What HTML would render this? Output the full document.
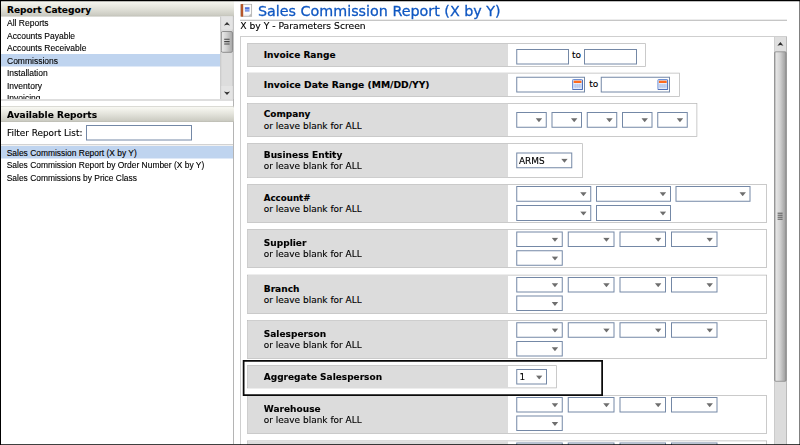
<!DOCTYPE html>
<html><head><meta charset="utf-8"><title>Sales Commission Report (X by Y)</title>
<style>
html,body{margin:0;padding:0;}
body{width:800px;height:445px;overflow:hidden;background:#fff;position:relative;}
#stage{position:absolute;left:0;top:0;width:3200px;height:1780px;transform:scale(0.25);transform-origin:0 0;font-family:"DejaVu Sans", "Liberation Sans", sans-serif;color:#000;}
#stage div,#stage span{box-sizing:border-box;}

.abs{position:absolute;}
.hdr{position:absolute;left:4px;width:932px;background:linear-gradient(#f8f8f2 0%,#e4e4dc 45%,#cbcbc2 92%,#b9b9b0 100%);}
.tx{position:absolute;white-space:nowrap;transform-origin:0 0;color:#000;-webkit-text-stroke:0.48px #000;}
.b{font-weight:bold;}
.ar{font-family:"Liberation Sans", sans-serif;}
.selbg{position:absolute;background:#bfd4ef;}
.row{position:absolute;left:988px;border:3.2px solid #b9b9b9;background:#fff;}
.lab{position:absolute;left:0;top:0;bottom:0;width:1041.2px;background:#dcdcdc;}
.inp{position:absolute;border:4px solid #7488a6;background:#fff;}
.cb{position:absolute;border:4px solid #7488a6;background:#fff;}
.cb svg{position:absolute;right:13.6px;top:20.4px;width:27.6px;height:18px;}
</style></head>
<body>
<div id="stage">
<div class="abs" style="left:932px;top:4px;width:4px;height:1772px;background:#b4b4b4"></div>
<div class="hdr" style="top:4px;height:62px"></div>
<div class="tx b" style="left:28px;top:15.72px;font-size:34.4px;line-height:44.72px;transform:scaleX(1.053);">Report Category</div>
<div class="abs" style="left:4px;top:66px;width:928px;height:330px;overflow:hidden">
<div class="selbg" style="left:0px;top:150px;width:878px;height:50px"></div>
<div class="tx ar" style="left:24px;top:4.12px;font-size:34px;line-height:44.2px;">All Reports</div>
<div class="tx ar" style="left:24px;top:54.12px;font-size:34px;line-height:44.2px;">Accounts Payable</div>
<div class="tx ar" style="left:24px;top:104.12px;font-size:34px;line-height:44.2px;">Accounts Receivable</div>
<div class="tx ar" style="left:24px;top:154.12px;font-size:34px;line-height:44.2px;">Commissions</div>
<div class="tx ar" style="left:24px;top:204.12px;font-size:34px;line-height:44.2px;">Installation</div>
<div class="tx ar" style="left:24px;top:254.12px;font-size:34px;line-height:44.2px;">Inventory</div>
<div class="tx ar" style="left:24px;top:304.12px;font-size:34px;line-height:44.2px;">Invoicing</div>
</div>
<div class="abs" style="left:881.2px;top:66px;width:52.8px;height:330px;background:#dddddd;border-left:4px solid #c6c6c6;border-right:4px solid #bdbdbd"></div>
<div class="abs" style="left:885.2px;top:66px;width:45.6px;height:52px;background:#e4e4e4"></div>
<div class="abs" style="left:885.2px;top:344px;width:45.6px;height:52px;background:#e4e4e4"></div>
<svg class="abs" style="left:884px;top:64px;width:48px;height:336px" viewBox="0 0 12 84"><path d="M2.9 9.6 L6 6 L9.1 9.6 L6 8.8 Z" fill="#333"/><rect x="0.3" y="15.5" width="11.2" height="20.8" rx="1.5" fill="url(#tg)" stroke="#8e8e8e"/><path d="M3.2 23.2h5.4M3.2 25.6h5.4M3.2 28h5.4" stroke="#444" stroke-width="1.1"/><path d="M2.9 75.4 L6 79 L9.1 75.4 L6 76.2 Z" fill="#333"/><defs><linearGradient id="tg" x1="0" x2="1" y1="0" y2="0"><stop offset="0" stop-color="#ececec"/><stop offset="0.45" stop-color="#d2d2d2"/><stop offset="1" stop-color="#a6a6a6"/></linearGradient></defs></svg>
<div class="abs" style="left:4px;top:397.6px;width:928px;height:4px;background:#bdbdbd"></div>
<div class="abs" style="left:4px;top:425.2px;width:932px;height:4px;background:#cfcfc8"></div>
<div class="hdr" style="top:429.2px;height:58.4px"></div>
<div class="tx b" style="left:28px;top:438.12px;font-size:34.4px;line-height:44.72px;transform:scaleX(1.055);">Available Reports</div>
<div class="tx" style="left:28px;top:508.12px;font-size:34.4px;line-height:44.72px;transform:scaleX(1.03);">Filter Report List:</div>
<div class="inp" style="left:344px;top:500px;width:424px;height:62px"></div>
<div class="abs" style="left:4px;top:576.8px;width:928px;height:4px;background:#c4c4c4"></div>
<div class="selbg" style="left:4px;top:584px;width:928px;height:50px"></div>
<div class="tx ar" style="left:26.8px;top:588.8px;font-size:33.72px;line-height:43.84px;">Sales Commission Report (X by Y)</div>
<div class="tx ar" style="left:26.8px;top:639px;font-size:33.72px;line-height:43.84px;">Sales Commission Report by Order Number (X by Y)</div>
<div class="tx ar" style="left:26.8px;top:689.2px;font-size:33.72px;line-height:43.84px;">Sales Commissions by Price Class</div>
<svg class="abs" style="left:960px;top:14px;width:52px;height:56px" viewBox="0 0 13 14"><rect x="2.2" y="0.8" width="9.4" height="12" fill="#f3f3f3" stroke="#b2b2b2" stroke-width="0.9"/><rect x="3" y="1.4" width="7.8" height="9.4" fill="#fcfcfc"/><rect x="0.3" y="0.6" width="1.2" height="12.6" rx="0.5" fill="#b9ada4"/><rect x="0.9" y="0.5" width="2.3" height="12.8" rx="0.7" fill="#b5562a"/><rect x="4.9" y="3.7" width="4.6" height="2.2" fill="#4f72dc"/><rect x="4.9" y="5.9" width="4.6" height="2.3" fill="#7d99e6"/><path d="M8.4 12.8 L11.6 9.6 L11.6 12.8 Z" fill="#bdbdbd"/></svg>
<div class="tx" style="left:1032px;top:7.44px;font-size:57.2px;line-height:74.36px;color:#0f57c2;-webkit-text-stroke:1.12px #0f57c2;">Sales Commission Report (X by Y)</div>
<div class="abs" style="left:960px;top:79.2px;width:2188px;height:4px;background:#b4b4b4"></div>
<div class="tx" style="left:961.2px;top:82.92px;font-size:34.4px;line-height:44.72px;transform:scaleX(1.07);">X by Y - Parameters Screen</div>
<div class="abs" style="left:960px;top:144.8px;width:2188px;height:1680px;border:3.2px solid #c0c0c0"></div>
<div class="abs" style="left:3095.6px;top:148px;width:52px;height:1629.6px;background:#dcdcdc;border-left:3.2px solid #c6c6c6;border-right:3.2px solid #b0b0b0"></div>
<div class="abs" style="left:3098.8px;top:148px;width:45.6px;height:56px;background:#dfdfdf"></div>
<svg class="abs" style="left:3096px;top:148px;width:52px;height:1380px" viewBox="0 0 13 345"><defs><linearGradient id="mg" x1="0" x2="1" y1="0" y2="0"><stop offset="0" stop-color="#9a9a9a"/><stop offset="0.12" stop-color="#e6e6e6"/><stop offset="0.45" stop-color="#d4d4d4"/><stop offset="0.9" stop-color="#a4a4a4"/><stop offset="1" stop-color="#8c8c8c"/></linearGradient></defs><path d="M3.4 8.7 L6.4 5 L9.4 8.7 L6.4 7.9 Z" fill="#2c2c2c"/><rect x="0.6" y="14.8" width="11.6" height="329.5" rx="1.2" fill="url(#mg)" stroke="#8a8a8a" stroke-width="0.8"/><path d="M3.6 176.2h5M3.6 178.2h5M3.6 180.2h5M3.6 182.2h5" stroke="#444" stroke-width="0.9"/></svg>
<div class="row" style="top:173.2px;height:94px;width:1595.2px"><div class="lab"></div></div>
<div class="tx b" style="left:1055px;top:199.32px;font-size:34.4px;line-height:44.72px;transform:scaleX(1.052);">Invoice Range</div>
<div class="inp" style="left:2064.8px;top:195.6px;width:211.6px;height:62.4px"></div>
<div class="tx" style="left:2287.6px;top:196.92px;font-size:34.4px;line-height:44.72px;transform:scaleX(1.05);">to</div>
<div class="inp" style="left:2335.6px;top:195.6px;width:212px;height:62.4px"></div>
<div class="row" style="top:291.2px;height:95.6px;width:1731.2px"><div class="lab"></div></div>
<div class="tx b" style="left:1055px;top:318.52px;font-size:34.4px;line-height:44.72px;transform:scaleX(1.069);">Invoice Date Range (MM/DD/YY)</div>
<div class="inp" style="left:2064.8px;top:307.2px;width:274.8px;height:63.2px"></div>
<svg class="abs" style="left:2288px;top:316px;width:44px;height:44px" viewBox="0 0 11 11"><rect x="0.5" y="0.5" width="10" height="10" rx="0.8" fill="#cddaf3" stroke="#6f8fd2"/><path d="M0.5 10.5H10.5V1" fill="none" stroke="#4f6fb8"/><rect x="1.7" y="1.7" width="7.7" height="2.3" fill="#ff6a1c"/><path d="M1.7 4.5h7.7M1.7 9.3h7.7" stroke="#f4f7fd" stroke-width="0.7"/><path d="M1.7 6.1h7.7M1.7 7.7h7.7M3.6 4.9v4M5.55 4.9v4M7.5 4.9v4" stroke="#b4c4ea" stroke-width="0.6"/></svg>
<div class="tx" style="left:2357.2px;top:315.32px;font-size:34.4px;line-height:44.72px;transform:scaleX(1.05);">to</div>
<div class="inp" style="left:2403.2px;top:307.2px;width:276.8px;height:63.2px"></div>
<svg class="abs" style="left:2629.2px;top:316px;width:44px;height:44px" viewBox="0 0 11 11"><rect x="0.5" y="0.5" width="10" height="10" rx="0.8" fill="#cddaf3" stroke="#6f8fd2"/><path d="M0.5 10.5H10.5V1" fill="none" stroke="#4f6fb8"/><rect x="1.7" y="1.7" width="7.7" height="2.3" fill="#ff6a1c"/><path d="M1.7 4.5h7.7M1.7 9.3h7.7" stroke="#f4f7fd" stroke-width="0.7"/><path d="M1.7 6.1h7.7M1.7 7.7h7.7M3.6 4.9v4M5.55 4.9v4M7.5 4.9v4" stroke="#b4c4ea" stroke-width="0.6"/></svg>
<div class="row" style="top:411.6px;height:135.6px;width:1800.8px"><div class="lab"></div></div>
<div class="tx b" style="left:1055px;top:434.92px;font-size:34.4px;line-height:44.72px;transform:scaleX(1.04);">Company</div>
<div class="tx" style="left:1055px;top:480.12px;font-size:34.4px;line-height:44.72px;transform:scaleX(1.044);">or leave blank for ALL</div>
<div class="cb" style="left:2064.8px;top:448px;width:122.4px;height:63.2px"><svg viewBox="0 0 7 4.5"><path d="M0.2 0.3 H6.8 L3.5 4.3 Z" fill="#6e6e6e"/></svg></div>
<div class="cb" style="left:2205.8px;top:448px;width:122.4px;height:63.2px"><svg viewBox="0 0 7 4.5"><path d="M0.2 0.3 H6.8 L3.5 4.3 Z" fill="#6e6e6e"/></svg></div>
<div class="cb" style="left:2346.8px;top:448px;width:122.4px;height:63.2px"><svg viewBox="0 0 7 4.5"><path d="M0.2 0.3 H6.8 L3.5 4.3 Z" fill="#6e6e6e"/></svg></div>
<div class="cb" style="left:2487.8px;top:448px;width:122.4px;height:63.2px"><svg viewBox="0 0 7 4.5"><path d="M0.2 0.3 H6.8 L3.5 4.3 Z" fill="#6e6e6e"/></svg></div>
<div class="cb" style="left:2628.8px;top:448px;width:122.4px;height:63.2px"><svg viewBox="0 0 7 4.5"><path d="M0.2 0.3 H6.8 L3.5 4.3 Z" fill="#6e6e6e"/></svg></div>
<div class="row" style="top:573.2px;height:138.4px;width:1342.8px"><div class="lab"></div></div>
<div class="tx b" style="left:1055px;top:596.52px;font-size:34.4px;line-height:44.72px;transform:scaleX(1.052);">Business Entity</div>
<div class="tx" style="left:1055px;top:640.92px;font-size:34.4px;line-height:44.72px;transform:scaleX(1.044);">or leave blank for ALL</div>
<div class="cb" style="left:2064.8px;top:609.8px;width:224.4px;height:63.2px"><svg viewBox="0 0 7 4.5"><path d="M0.2 0.3 H6.8 L3.5 4.3 Z" fill="#6e6e6e"/></svg></div>
<div class="tx" style="left:2075.6px;top:620.12px;font-size:34.4px;line-height:44.72px;transform:scaleX(1.04);">ARMS</div>
<div class="row" style="top:736.8px;height:154.6px;width:2079.6px"><div class="lab"></div></div>
<div class="tx b" style="left:1055px;top:769.72px;font-size:34.4px;line-height:44.72px;transform:scaleX(1.01);">Account#</div>
<div class="tx" style="left:1055px;top:813.72px;font-size:34.4px;line-height:44.72px;transform:scaleX(1.044);">or leave blank for ALL</div>
<div class="cb" style="left:2064.8px;top:744px;width:300px;height:63.2px"><svg viewBox="0 0 7 4.5"><path d="M0.2 0.3 H6.8 L3.5 4.3 Z" fill="#6e6e6e"/></svg></div>
<div class="cb" style="left:2383.6px;top:744px;width:300px;height:63.2px"><svg viewBox="0 0 7 4.5"><path d="M0.2 0.3 H6.8 L3.5 4.3 Z" fill="#6e6e6e"/></svg></div>
<div class="cb" style="left:2702.4px;top:744px;width:300px;height:63.2px"><svg viewBox="0 0 7 4.5"><path d="M0.2 0.3 H6.8 L3.5 4.3 Z" fill="#6e6e6e"/></svg></div>
<div class="cb" style="left:2064.8px;top:820.4px;width:300px;height:63.2px"><svg viewBox="0 0 7 4.5"><path d="M0.2 0.3 H6.8 L3.5 4.3 Z" fill="#6e6e6e"/></svg></div>
<div class="cb" style="left:2383.6px;top:820.4px;width:300px;height:63.2px"><svg viewBox="0 0 7 4.5"><path d="M0.2 0.3 H6.8 L3.5 4.3 Z" fill="#6e6e6e"/></svg></div>
<div class="row" style="top:916.8px;height:154.6px;width:2079.6px"><div class="lab"></div></div>
<div class="tx b" style="left:1055px;top:949.32px;font-size:34.4px;line-height:44.72px;transform:scaleX(1.052);">Supplier</div>
<div class="tx" style="left:1055px;top:993.32px;font-size:34.4px;line-height:44.72px;transform:scaleX(1.044);">or leave blank for ALL</div>
<div class="cb" style="left:2064.8px;top:925.6px;width:186.4px;height:62px"><svg viewBox="0 0 7 4.5"><path d="M0.2 0.3 H6.8 L3.5 4.3 Z" fill="#6e6e6e"/></svg></div>
<div class="cb" style="left:2271.2px;top:925.6px;width:186.4px;height:62px"><svg viewBox="0 0 7 4.5"><path d="M0.2 0.3 H6.8 L3.5 4.3 Z" fill="#6e6e6e"/></svg></div>
<div class="cb" style="left:2477.6px;top:925.6px;width:186.4px;height:62px"><svg viewBox="0 0 7 4.5"><path d="M0.2 0.3 H6.8 L3.5 4.3 Z" fill="#6e6e6e"/></svg></div>
<div class="cb" style="left:2684px;top:925.6px;width:186.4px;height:62px"><svg viewBox="0 0 7 4.5"><path d="M0.2 0.3 H6.8 L3.5 4.3 Z" fill="#6e6e6e"/></svg></div>
<div class="cb" style="left:2064.8px;top:1000.8px;width:186.4px;height:62px"><svg viewBox="0 0 7 4.5"><path d="M0.2 0.3 H6.8 L3.5 4.3 Z" fill="#6e6e6e"/></svg></div>
<div class="row" style="top:1099.2px;height:156px;width:2079.6px"><div class="lab"></div></div>
<div class="tx b" style="left:1055px;top:1132.52px;font-size:34.4px;line-height:44.72px;transform:scaleX(1.052);">Branch</div>
<div class="tx" style="left:1055px;top:1176.52px;font-size:34.4px;line-height:44.72px;transform:scaleX(1.044);">or leave blank for ALL</div>
<div class="cb" style="left:2064.8px;top:1108px;width:186.4px;height:62px"><svg viewBox="0 0 7 4.5"><path d="M0.2 0.3 H6.8 L3.5 4.3 Z" fill="#6e6e6e"/></svg></div>
<div class="cb" style="left:2271.2px;top:1108px;width:186.4px;height:62px"><svg viewBox="0 0 7 4.5"><path d="M0.2 0.3 H6.8 L3.5 4.3 Z" fill="#6e6e6e"/></svg></div>
<div class="cb" style="left:2477.6px;top:1108px;width:186.4px;height:62px"><svg viewBox="0 0 7 4.5"><path d="M0.2 0.3 H6.8 L3.5 4.3 Z" fill="#6e6e6e"/></svg></div>
<div class="cb" style="left:2684px;top:1108px;width:186.4px;height:62px"><svg viewBox="0 0 7 4.5"><path d="M0.2 0.3 H6.8 L3.5 4.3 Z" fill="#6e6e6e"/></svg></div>
<div class="cb" style="left:2064.8px;top:1182.4px;width:186.4px;height:62px"><svg viewBox="0 0 7 4.5"><path d="M0.2 0.3 H6.8 L3.5 4.3 Z" fill="#6e6e6e"/></svg></div>
<div class="row" style="top:1280px;height:155.2px;width:2079.6px"><div class="lab"></div></div>
<div class="tx b" style="left:1055px;top:1313.72px;font-size:34.4px;line-height:44.72px;transform:scaleX(1.052);">Salesperson</div>
<div class="tx" style="left:1055px;top:1357.72px;font-size:34.4px;line-height:44.72px;transform:scaleX(1.044);">or leave blank for ALL</div>
<div class="cb" style="left:2064.8px;top:1288.8px;width:186.4px;height:62px"><svg viewBox="0 0 7 4.5"><path d="M0.2 0.3 H6.8 L3.5 4.3 Z" fill="#6e6e6e"/></svg></div>
<div class="cb" style="left:2271.2px;top:1288.8px;width:186.4px;height:62px"><svg viewBox="0 0 7 4.5"><path d="M0.2 0.3 H6.8 L3.5 4.3 Z" fill="#6e6e6e"/></svg></div>
<div class="cb" style="left:2477.6px;top:1288.8px;width:186.4px;height:62px"><svg viewBox="0 0 7 4.5"><path d="M0.2 0.3 H6.8 L3.5 4.3 Z" fill="#6e6e6e"/></svg></div>
<div class="cb" style="left:2684px;top:1288.8px;width:186.4px;height:62px"><svg viewBox="0 0 7 4.5"><path d="M0.2 0.3 H6.8 L3.5 4.3 Z" fill="#6e6e6e"/></svg></div>
<div class="cb" style="left:2064.8px;top:1364px;width:186.4px;height:62px"><svg viewBox="0 0 7 4.5"><path d="M0.2 0.3 H6.8 L3.5 4.3 Z" fill="#6e6e6e"/></svg></div>
<div class="row" style="top:1580.8px;height:153.8px;width:2079.6px"><div class="lab"></div></div>
<div class="tx b" style="left:1055px;top:1612.12px;font-size:34.4px;line-height:44.72px;transform:scaleX(1.052);">Warehouse</div>
<div class="tx" style="left:1055px;top:1656.12px;font-size:34.4px;line-height:44.72px;transform:scaleX(1.044);">or leave blank for ALL</div>
<div class="cb" style="left:2064.8px;top:1587.6px;width:186.4px;height:62px"><svg viewBox="0 0 7 4.5"><path d="M0.2 0.3 H6.8 L3.5 4.3 Z" fill="#6e6e6e"/></svg></div>
<div class="cb" style="left:2271.2px;top:1587.6px;width:186.4px;height:62px"><svg viewBox="0 0 7 4.5"><path d="M0.2 0.3 H6.8 L3.5 4.3 Z" fill="#6e6e6e"/></svg></div>
<div class="cb" style="left:2477.6px;top:1587.6px;width:186.4px;height:62px"><svg viewBox="0 0 7 4.5"><path d="M0.2 0.3 H6.8 L3.5 4.3 Z" fill="#6e6e6e"/></svg></div>
<div class="cb" style="left:2684px;top:1587.6px;width:186.4px;height:62px"><svg viewBox="0 0 7 4.5"><path d="M0.2 0.3 H6.8 L3.5 4.3 Z" fill="#6e6e6e"/></svg></div>
<div class="cb" style="left:2064.8px;top:1662.4px;width:186.4px;height:62px"><svg viewBox="0 0 7 4.5"><path d="M0.2 0.3 H6.8 L3.5 4.3 Z" fill="#6e6e6e"/></svg></div>
<div class="row" style="top:1762.4px;height:154.6px;width:2079.6px"><div class="lab"></div></div>
<div class="cb" style="left:2064.8px;top:1770px;width:186.4px;height:62px"><svg viewBox="0 0 7 4.5"><path d="M0.2 0.3 H6.8 L3.5 4.3 Z" fill="#6e6e6e"/></svg></div>
<div class="cb" style="left:2271.2px;top:1770px;width:186.4px;height:62px"><svg viewBox="0 0 7 4.5"><path d="M0.2 0.3 H6.8 L3.5 4.3 Z" fill="#6e6e6e"/></svg></div>
<div class="cb" style="left:2477.6px;top:1770px;width:186.4px;height:62px"><svg viewBox="0 0 7 4.5"><path d="M0.2 0.3 H6.8 L3.5 4.3 Z" fill="#6e6e6e"/></svg></div>
<div class="cb" style="left:2684px;top:1770px;width:186.4px;height:62px"><svg viewBox="0 0 7 4.5"><path d="M0.2 0.3 H6.8 L3.5 4.3 Z" fill="#6e6e6e"/></svg></div>
<div class="cb" style="left:2064.8px;top:1846.4px;width:186.4px;height:62px"><svg viewBox="0 0 7 4.5"><path d="M0.2 0.3 H6.8 L3.5 4.3 Z" fill="#6e6e6e"/></svg></div>
<div class="abs" style="left:970.6px;top:1440px;width:1441.2px;height:144.4px;border:7.4px solid #0a0a0a;background:#fff"></div>
<div class="row" style="top:1460.8px;height:92.4px;width:1238.8px"><div class="lab"></div></div>
<div class="tx b" style="left:1055px;top:1483.72px;font-size:34.4px;line-height:44.72px;transform:scaleX(1.045);">Aggregate Salesperson</div>
<div class="cb" style="left:2064.8px;top:1476.4px;width:123.2px;height:62px"><svg viewBox="0 0 7 4.5"><path d="M0.2 0.3 H6.8 L3.5 4.3 Z" fill="#6e6e6e"/></svg></div>
<div class="tx" style="left:2077.6px;top:1483.72px;font-size:34.4px;line-height:44.72px;transform:scaleX(1.04);">1</div>
<div class="abs" style="left:0px;top:0px;width:3200px;height:5px;background:#000"></div><div class="abs" style="left:0px;top:0px;width:4.4px;height:1780px;background:#000"></div><div class="abs" style="left:3197.8px;top:0px;width:2.4px;height:1780px;background:#000"></div><div class="abs" style="left:0px;top:1776.8px;width:3200px;height:3.2px;background:#000"></div>
</div>
</body></html>
